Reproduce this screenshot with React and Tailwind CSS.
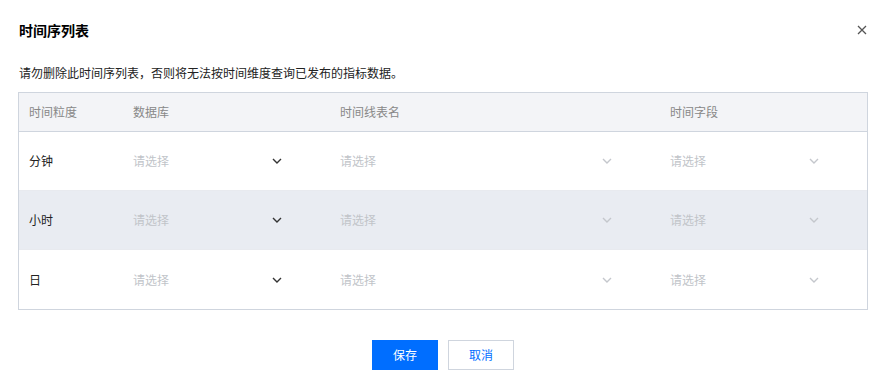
import React from "react";

const Chevron = ({ dark }) => (
  <svg width="10" height="6" viewBox="0 0 10 6" fill="none" className="shrink-0">
    <path d="M1 1L5 5L9 1" stroke={dark ? "#333" : "#c4c7cc"} strokeWidth="1.4" />
  </svg>
);

const Select = ({ dark }) => (
  <div className="flex items-center justify-between pl-[10px] pr-[48px] h-full">
    <span className="text-[#c1c4c9]">请选择</span>
    <Chevron dark={dark} />
  </div>
);

const rows = ["分钟", "小时", "日"];

export default function App() {
  return (
    <div
      className="w-[890px] h-[390px] bg-white text-[12px] text-[#333]"
      style={{ fontFamily: '"Noto Sans CJK SC", "Noto Sans", sans-serif' }}
    >
      <div className="flex items-center justify-between pl-[19px] pr-[23px] pt-[19px] h-[40px]">
        <div className="text-[14px] font-bold text-black leading-[20px]">时间序列表</div>
        <svg width="10" height="10" viewBox="0 0 10 10">
          <path d="M1 1L9 9M9 1L1 9" stroke="#555" strokeWidth="1.3" />
        </svg>
      </div>
      <div className="pl-[19px] mt-[24px] leading-[18px] text-[#222]">
        请勿删除此时间序列表，否则将无法按时间维度查询已发布的指标数据。
      </div>
      <div className="ml-[18px] mt-[10px] w-[850px] border border-[#cfd5de]">
        <div className="grid grid-cols-[104px_207px_330px_207px] h-[39px] items-center bg-[#f3f4f7] border-b border-[#cfd5de] text-[#888]">
          <div className="pl-[10px]">时间粒度</div>
          <div className="pl-[10px]">数据库</div>
          <div className="pl-[10px]">时间线表名</div>
          <div className="pl-[10px]">时间字段</div>
        </div>
        {rows.map((r, i) => (
          <div
            key={r}
            className={`grid grid-cols-[104px_207px_330px_207px] h-[59px] items-center ${
              i === 1 ? "bg-[#e9ecf2]" : "bg-white"
            } ${i < 2 ? "border-b border-[#e8eaef]" : ""}`}
          >
            <div className="pl-[10px] text-[#222]">{r}</div>
            <Select dark />
            <Select />
            <Select />
          </div>
        ))}
      </div>
      <div className="flex justify-center gap-[10px] mt-[30px] pr-[4px]">
        <button className="w-[66px] h-[30px] bg-[#006eff] text-white text-[12px]">保存</button>
        <button className="w-[66px] h-[30px] border border-[#cfd5de] bg-white text-[#006eff] text-[12px]">
          取消
        </button>
      </div>
    </div>
  );
}
